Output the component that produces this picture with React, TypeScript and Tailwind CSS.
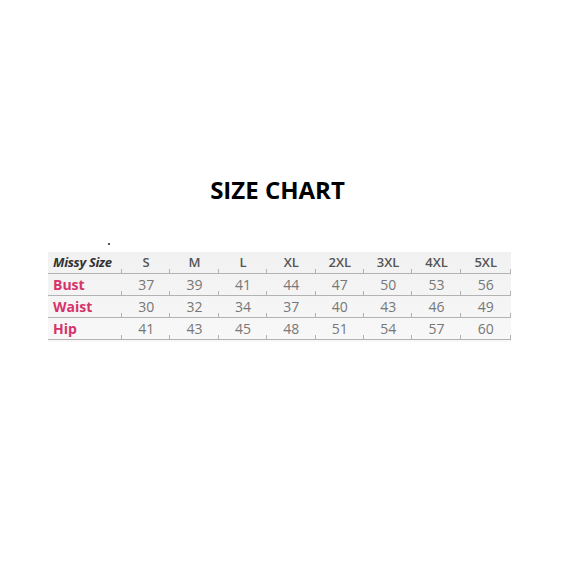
const sizes = ["S", "M", "L", "XL", "2XL", "3XL", "4XL", "5XL"];

const rows = [
  { label: "Bust", values: [37, 39, 41, 44, 47, 50, 53, 56] },
  { label: "Waist", values: [30, 32, 34, 37, 40, 43, 46, 49] },
  { label: "Hip", values: [41, 43, 45, 48, 51, 54, 57, 60] },
];

function Cell({ children, className = "" }: { children: React.ReactNode; className?: string }) {
  return (
    <div className={`relative flex h-[22px] items-center border-b-[1.5px] border-[#b3b3b3] ${className}`}>
      {children}
      {/* little tick on the right */}
      <span className="absolute bottom-0 right-0 h-[4px] w-px bg-[#b3b3b3]" />
    </div>
  );
}

export default function App() {
  return (
    <div className="h-[580px] w-[580px] bg-white font-['Open_Sans',sans-serif]">
      <div className="ml-[48px] w-[463px] pt-[176px]">
        <h1 className="pr-[4px] text-center text-[24px] leading-[28px] font-bold text-black">SIZE CHART</h1>

        <div className="mt-[39px] ml-[60px] h-[2px] w-[2px] bg-[#555]" />

        <div className="mt-[7px] grid grid-cols-[74px_repeat(7,48.4px)_50px] bg-gradient-to-b from-[#f1f1f1] to-[#f8f8f8] pb-[2px]">
          <Cell className="pl-[5px]">
            <span className="text-[13px] font-bold italic tracking-[-0.3px] text-[#333]">Missy Size</span>
          </Cell>
          {sizes.map((s) => (
            <Cell key={s} className="justify-center">
              <span className="text-[13px] font-semibold text-[#555]">{s}</span>
            </Cell>
          ))}

          {rows.map((r) => (
            <div key={r.label} className="contents">
              <Cell className="pl-[5px]">
                <span className="text-[14px] font-bold text-[#d6336a]">{r.label}</span>
              </Cell>
              {r.values.map((v, i) => (
                <Cell key={i} className="justify-center">
                  <span className="text-[14px] text-[#777]">{v}</span>
                </Cell>
              ))}
            </div>
          ))}
        </div>
      </div>
    </div>
  );
}
